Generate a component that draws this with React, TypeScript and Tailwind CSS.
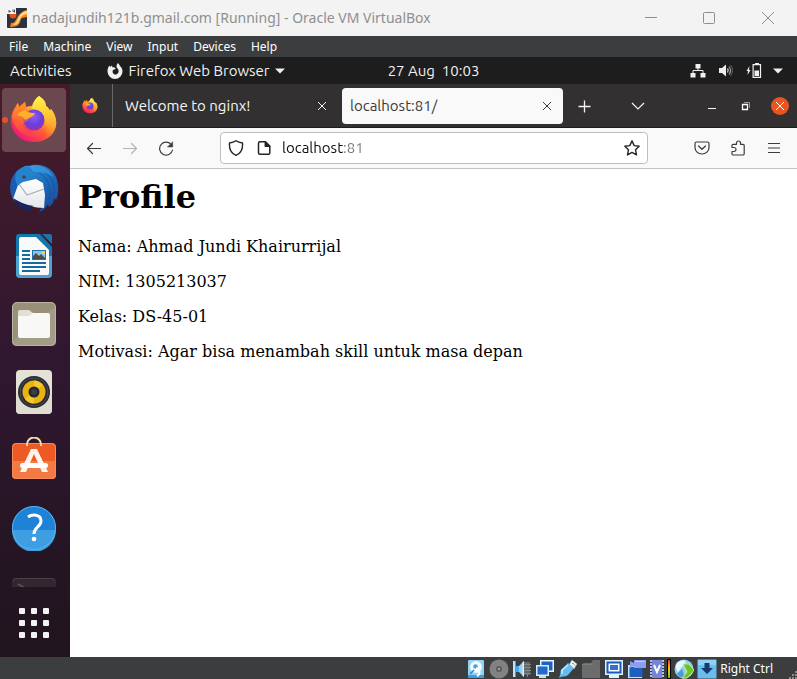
import type { ReactNode } from "react";

const uiFont = "font-['Ubuntu','Noto_Sans',sans-serif]";
const winFont = "font-['Segoe_UI','Noto_Sans',sans-serif]";

/* ---------- Launcher icons ---------- */

function FirefoxLogo({ id, className }: { id: string; className: string }) {
  return (
    <svg viewBox="0 0 48 48" className={className} aria-hidden="true">
      <defs>
        <linearGradient id={`${id}-body`} x1="0.85" y1="0.1" x2="0.2" y2="0.95">
          <stop offset="0" stopColor="#fff04e" />
          <stop offset="0.35" stopColor="#ffb02e" />
          <stop offset="0.6" stopColor="#ff5a36" />
          <stop offset="1" stopColor="#f0147a" />
        </linearGradient>
        <linearGradient id={`${id}-flame`} x1="0.5" y1="0" x2="0.6" y2="1">
          <stop offset="0" stopColor="#fff24a" />
          <stop offset="0.5" stopColor="#ffc233" />
          <stop offset="1" stopColor="#ff7a2e" stopOpacity="0" />
        </linearGradient>
        <radialGradient id={`${id}-globe`} cx="0.5" cy="0.35" r="0.65">
          <stop offset="0" stopColor="#8a5cff" />
          <stop offset="0.6" stopColor="#6a3fd6" />
          <stop offset="1" stopColor="#9a2fc0" />
        </radialGradient>
        <linearGradient id={`${id}-head`} x1="0" y1="0" x2="0.6" y2="1">
          <stop offset="0" stopColor="#ff9a24" />
          <stop offset="1" stopColor="#ff5535" stopOpacity="0.2" />
        </linearGradient>
      </defs>
      <path
        fill={`url(#${id}-body)`}
        d="M29 0c4 3 6 6 7 10 2 1 3 3 4 5l1-2c4 5 6 11 5 17C44 40 35 46 24 46 11 46 1 37 1 24c0-6 2-10 5-14 0-1 1-2 2-3l1 4 6-5 1 5c2-1 4-1 6-1 1-4 4-8 7-10z"
      />
      <path
        fill={`url(#${id}-flame)`}
        d="M29 0c5 3 7 6 7 10 2 1 3 3 4 5l1-2c4 5 6 11 5 17-2 6-6 10-11 12 3-7 2-14-2-20-2-4-7-6-11-10 1-5 3-9 7-12z"
      />
      <circle cx="24" cy="24" r="10.5" fill={`url(#${id}-globe)`} />
      <path
        fill={`url(#${id}-head)`}
        d="M2 19c2-4 3-7 6-12l1 4 6-5 1 6c2 4 4 5 9 5 0 4-5 4-6 6-1 3-4 3-6 4-1 6 5 10 12 9 5-1 8-3 10-6 1 8-8 13-17 10C9 37 3 29 2 19z"
      />
      <path fill="#ffb02a" d="M15 14c3 3 6 3 10 3-1 3-4 4-6 5l-4 2c-1-3-5-5-8-4 1-3 4-5 8-6z" />
    </svg>
  );
}

function ThunderbirdLogo() {
  return (
    <svg viewBox="0 0 50 50" className="size-[50px]" aria-hidden="true">
      <defs>
        <linearGradient id="tb-body" x1="0.2" y1="0" x2="0.8" y2="1">
          <stop offset="0" stopColor="#3096da" />
          <stop offset="0.5" stopColor="#1d68b8" />
          <stop offset="1" stopColor="#194a9c" />
        </linearGradient>
        <linearGradient id="tb-mail" x1="0" y1="0" x2="0" y2="1">
          <stop offset="0" stopColor="#ffffff" />
          <stop offset="1" stopColor="#e4e6ea" />
        </linearGradient>
      </defs>
      <path fill="#1b5bb0" d="M8 8C0 15-1 29 5 38l8 6 5-32z" />
      <path
        fill="url(#tb-body)"
        d="M10 7c3-3 7-5 10-4C32-1 43 5 47 14c3 8 3 16 0 23l-2-2c0 4-2 7-5 9l-1-3c-2 4-5 7-9 8 5-7 6-14 3-22l-8-9-9 2-6 6c-4-8-4-14 0-19z"
      />
      <path fill="none" stroke="#174a94" strokeWidth="1" d="M30 10c9 5 13 14 10 27M35 8c9 7 12 16 9 24" opacity="0.6" />
      <path fill="#3da4e2" d="M20 3c10-2 20 2 24 11-8-6-15-4-21-6-4-1-4-3-3-5z" opacity="0.6" />
      <path fill="url(#tb-mail)" d="M14 19l13-3 7 4 2 12-1 13c-9 0-20-3-31-9l5-14z" />
      <path fill="none" stroke="#a8adb8" strokeWidth="1.2" d="M10 21l8 11 17-6" />
      <path fill="#17265c" d="M4 35c6 4 13 7 21 8-5 1-4 3-1 6C15 48 8 44 4 35z" />
      <path fill="#2583ce" d="M8 8c4-4 9-5 14-3 2 3 2 6 0 9-3 3-8 3-11 6l-2 3c-3-5-4-10-1-15z" />
      <circle cx="15" cy="14" r="1.8" fill="#4a3f45" />
    </svg>
  );
}

function WriterLogo() {
  return (
    <svg viewBox="0 0 38 46" className="h-[46px] w-[38px]" aria-hidden="true">
      <path fill="#1478ae" d="M4 1h21l12 13v27a4 4 0 0 1-4 4H5a4 4 0 0 1-4-4V4a3 3 0 0 1 3-3z" />
      <path fill="#4ba3d0" d="M1 23h36v18a4 4 0 0 1-4 4H5a4 4 0 0 1-4-4z" />
      <path fill="#fafafa" d="M6 4h15l13 13v23a2 2 0 0 1-2 2H6a2 2 0 0 1-2-2V6a2 2 0 0 1 2-2z" />
      <path fill="#1b75aa" d="M27 1h8a2 2 0 0 1 2 2v8z" />
      <g stroke="#146c9e" strokeWidth="2">
        <path d="M7 18h8M7 22h8M7 26h8M7 30h24M7 34h24M7 38h18" />
      </g>
      <path fill="#1b75aa" d="M17 17h14v10H17z" />
      <path fill="#86c6ee" d="M18 18h12v8H18z" />
      <path fill="#4d4d4d" d="M18 26v-3l3-3 3 3 2-2 4 4v1z" />
      <circle cx="28.5" cy="19.5" r="1.5" fill="#ffd23e" />
    </svg>
  );
}

function FilesLogo() {
  return (
    <svg viewBox="0 0 46 46" className="size-[46px]" aria-hidden="true">
      <rect x="1" y="1" width="44" height="44" rx="5" fill="#989079" />
      <path fill="#b0aa98" d="M1 41L45 5v36a4 4 0 0 1-4 4H5a4 4 0 0 1-4-4z" opacity="0.45" />
      <rect x="1.5" y="1.5" width="43" height="43" rx="5" fill="none" stroke="#b9b4a2" />
      <path fill="#e2dfd3" d="M7 11a2 2 0 0 1 2-2h9l4 3h15v8H7z" />
      <path fill="#f8f8f6" d="M7 15h11l4-3h15a2 2 0 0 1 2 2v21a2 2 0 0 1-2 2H9a2 2 0 0 1-2-2z" />
    </svg>
  );
}

function RhythmboxLogo() {
  return (
    <svg viewBox="0 0 38 46" className="h-[46px] w-[38px]" aria-hidden="true">
      <rect x="1" y="1" width="36" height="44" rx="4" fill="#e4e1d7" />
      <path fill="#dcd8cc" d="M1 24h36v17a4 4 0 0 1-4 4H5a4 4 0 0 1-4-4z" opacity="0.6" />
      <circle cx="19" cy="23" r="16" fill="#2a2c36" />
      <circle cx="19" cy="23" r="14" fill="none" stroke="#4a4b52" />
      <circle cx="19" cy="23" r="11.500" fill="#e9b312" />
      <path fill="#f8d336" d="M19 23l-9 7a11.500 11.500 0 0 0 9 4.500zM19 23l9-7a11.500 11.500 0 0 0-9-4.500z" opacity="0.7" />
      <circle cx="19" cy="23" r="5.500" fill="#25262b" />
      <circle cx="19" cy="23" r="3" fill="#3d3e44" />
    </svg>
  );
}

function SoftwareLogo() {
  return (
    <svg viewBox="0 0 46 46" className="size-[46px]" aria-hidden="true">
      <rect x="1" y="6" width="44" height="36" rx="4" fill="#ee5a24" />
      <path fill="#f47a45" d="M1 24h44v14a4 4 0 0 1-4 4H5a4 4 0 0 1-4-4z" />
      <rect x="1.5" y="6.500" width="43" height="35" rx="4" fill="none" stroke="#f68b5b" />
      <path fill="none" stroke="#f3dba9" strokeWidth="2" d="M16 9V7.500a7 7 0 0 1 14 0V9" />
      <path fill="#fff" fillRule="evenodd" d="M20 12h6l11 23h-6l-8-18-8 18H9z" opacity="0.92" />
      <rect x="9" y="26" width="28" height="5" rx="2.500" fill="#fff" />
    </svg>
  );
}

function HelpLogo() {
  return (
    <svg viewBox="0 0 46 46" className="size-[46px]" aria-hidden="true">
      <circle cx="23" cy="23" r="22" fill="#1e82d6" />
      <path fill="#3d9fe2" d="M1 25h44a22 22 0 0 1-44 0z" />
      <circle cx="23" cy="23" r="21.500" fill="none" stroke="#5db2ea" />
      <path
        fill="none"
        stroke="#fff"
        strokeWidth="3"
        d="M17 12c4-3 13-3 13 4 0 6-7 6-7 13"
      />
      <circle cx="23" cy="34" r="2.300" fill="#fff" />
    </svg>
  );
}

function TerminalLogo() {
  return (
    <svg viewBox="0 0 46 46" className="size-[46px]" aria-hidden="true">
      <rect x="1" y="2" width="44" height="44" rx="4" fill="#33262f" />
      <path fill="none" stroke="#4d3f48" d="M2 5.500a3 3 0 0 1 3-3h36a3 3 0 0 1 3 3" />
      <path fill="none" stroke="#62535c" strokeWidth="1.500" d="M7 8l7 4-7 4" />
    </svg>
  );
}

function DockItem({ label, active, children }: { label: string; active?: boolean; children: ReactNode }) {
  return (
    <button
      aria-label={label}
      className={`relative flex size-16 shrink-0 items-center justify-center rounded-[4px] ${active ? "bg-[#6b4850]" : ""}`}
    >
      {active && <span className="absolute left-0 top-[29px] size-[6px] rounded-full bg-[#e95420]" />}
      {children}
    </button>
  );
}

function Dock() {
  return (
    <nav
      aria-label="Dock"
      className="flex w-[70px] shrink-0 flex-col bg-linear-to-b from-[#471a29] via-[#2f1730] to-[#20141d] pl-[2px] pt-1"
    >
      <div className="flex h-[499px] flex-col gap-1 overflow-hidden">
        <DockItem label="Firefox Web Browser" active>
          <FirefoxLogo id="dock-ff" className="size-12" />
        </DockItem>
        <DockItem label="Thunderbird Mail"><ThunderbirdLogo /></DockItem>
        <DockItem label="LibreOffice Writer"><WriterLogo /></DockItem>
        <DockItem label="Files"><FilesLogo /></DockItem>
        <DockItem label="Rhythmbox"><RhythmboxLogo /></DockItem>
        <DockItem label="Ubuntu Software"><SoftwareLogo /></DockItem>
        <DockItem label="Help"><HelpLogo /></DockItem>
        <div className="flex w-16 justify-center pt-3"><TerminalLogo /></div>
      </div>
      <button aria-label="Show Applications" className="mt-1 flex size-16 items-center justify-center">
        <span className="grid grid-cols-3 gap-[6px]">
          {Array.from({ length: 9 }, (_, i) => (
            <span key={i} className="size-[6px] rounded-[1px] bg-[#f2f2f2]" />
          ))}
        </span>
      </button>
    </nav>
  );
}

/* ---------- Host window ---------- */

function VirtualBoxIcon() {
  return (
    <svg viewBox="0 0 20 20" className="size-5" aria-hidden="true">
      <rect width="20" height="20" rx="1" fill="#2c3040" />
      <path fill="#f08a1d" d="M20 2v7l-5 1c-2 1-1 4-3 6-1 2-4 3-9 3l1-4c4 0 4-2 6-5 2-4 5-7 10-8z" />
      <path fill="#ffd98a" d="M20 3v3c-6 1-6 4-8 7-1 3-3 4-6 4 5-3 4-6 7-10 2-2 4-4 7-4z" />
      <circle cx="6" cy="7" r="3.500" fill="#e2541b" />
      <rect width="9" height="6" fill="#f4f4f4" />
      <path stroke="#555" d="M2 2v2.500M2 3.500h2M6 1.500v2h2M7.500 1.500v3" fill="none" />
    </svg>
  );
}

function TitleBar() {
  return (
    <header className={`flex h-9 items-center bg-[#f3f3f3] pl-[7px] text-[#8f8f8f] ${winFont}`}>
      <VirtualBoxIcon />
      <h1 className="ml-[5px] flex-1 whitespace-nowrap text-[14px] leading-5">
        nadajundih121b.gmail.com [Running] - Oracle VM VirtualBox
      </h1>
      <button aria-label="Minimize" className="flex h-8 w-[58px] items-center justify-center">
        <svg viewBox="0 0 14 14" className="size-[14px]" fill="none" stroke="currentColor"><path d="M0 6.500h12" /></svg>
      </button>
      <button aria-label="Maximize" className="flex h-8 w-[58px] items-center justify-center">
        <svg viewBox="0 0 14 14" className="size-[14px]" fill="none" stroke="currentColor"><rect x="0.500" y="1.500" width="11" height="11" rx="1" /></svg>
      </button>
      <button aria-label="Close" className="flex h-8 w-[58px] items-center justify-center">
        <svg viewBox="0 0 14 14" className="size-[14px]" fill="none" stroke="currentColor"><path d="M1 1l12 12M13 1L1 13" /></svg>
      </button>
    </header>
  );
}

function MenuBar() {
  return (
    <nav aria-label="Machine menu" className={`flex h-[21px] items-center gap-[15px] bg-[#3c3d3e] pl-[9px] text-[12px] leading-4 text-white ${winFont}`}>
      {["File", "Machine", "View", "Input", "Devices", "Help"].map((m) => (
        <button key={m}>{m}</button>
      ))}
    </nav>
  );
}

/* ---------- Guest top bar ---------- */

function TopBar() {
  return (
    <div className={`grid h-[27px] grid-cols-[1fr_auto_1fr] items-center bg-[#1d1d1d] px-[10px] text-[15px] leading-5 text-[#f0f0f0] ${uiFont}`}>
      <div className="flex items-center gap-[35px]">
        <button>Activities</button>
        <button className="flex items-center whitespace-nowrap">
          <svg viewBox="0 0 16 16" className="mr-[6px] size-4" aria-hidden="true">
            <path
              fill="#f0f0f0"
              fillRule="evenodd"
              d="M11 0c1 1 1.500 2 2 3 1.500 1 2.500 3 2.500 5.500A7.500 7.500 0 0 1 .5 8.500C.5 6 1 4 2.500 2.500L3 4l2-1.500.5 2c2-.5 3 .5 3 1.500L6 7c-1 2 0 4.500 2.500 4.500S12 9 11.500 7c-.5-1.500-2-2-2-3.500S10 1 11 0z"
            />
          </svg>
          Firefox Web Browser
          <svg viewBox="0 0 10 6" className="ml-[5px] h-[6px] w-[10px]" aria-hidden="true"><path fill="#f0f0f0" d="M0 0.500h10L5 5.500z" /></svg>
        </button>
      </div>
      <button className="whitespace-pre pl-[70px]">27 Aug  10:03</button>
      <button aria-label="System menu" className="flex items-center justify-end gap-3 pr-1">
        <svg viewBox="0 0 16 14" className="h-[14px] w-4" aria-hidden="true">
          <path fill="#f0f0f0" d="M5.500 0h5v4.500h-5zM0.500 9h5v4.500h-5zM10.500 9h5v4.500h-5z" />
          <path fill="none" stroke="#f0f0f0" d="M8 4v3M3 10V6.500h10V10" />
        </svg>
        <svg viewBox="0 0 16 14" className="h-[14px] w-4" aria-hidden="true">
          <path fill="#f0f0f0" d="M1 4h3L8 0.500v12L4 9H1z" />
          <path fill="none" stroke="#d0d0d0" d="M9.500 4.500q1.500 2 0 4" strokeWidth="1.300" />
          <path fill="none" stroke="#a0a0a0" d="M11 2.500q3 4 0 8" strokeWidth="1.200" />
          <path fill="none" stroke="#666" d="M12.500 1q4 5.500 0 11" />
        </svg>
        <svg viewBox="0 0 16 16" className="size-4" aria-hidden="true">
          <path fill="#f0f0f0" d="M3.500 3L.5 8H2l-.5 4 3-5H3z" />
          <path fill="none" stroke="#f0f0f0" strokeWidth="1.200" d="M7.100 1.600h7.400v12.800H7.100z" />
          <path fill="#f0f0f0" d="M9 0h4v1.500H9zM8.500 7.500h4.500V13H8.500z" />
        </svg>
        <svg viewBox="0 0 10 6" className="-ml-px h-[6px] w-[10px]" aria-hidden="true"><path fill="#f0f0f0" d="M0 0.500h10L5 5.500z" /></svg>
      </button>
    </div>
  );
}

/* ---------- Browser ---------- */

function Cross() {
  return (
    <svg viewBox="0 0 16 16" className="size-4" fill="none" stroke="currentColor" aria-hidden="true">
      <path d="M4 4l8 8M12 4l-8 8" />
    </svg>
  );
}

function TabBar() {
  return (
    <div className="flex h-11 items-center border-b border-[#1f1a1e] bg-[#323031] text-[15px] leading-5 text-[#f5f5f5]">
      <button aria-label="Firefox View" className="flex h-full w-[43px] shrink-0 items-center justify-center border-r border-[#6b696b] pr-[2px]">
        <FirefoxLogo id="tab-ff" className="size-4" />
      </button>
      <div role="tablist" className="flex min-w-0">
        <div className="flex h-9 w-[229px] items-center pl-3 pr-3">
          <button role="tab" aria-selected="false" className="flex-1 text-left">Welcome to nginx!</button>
          <button aria-label="Close Welcome to nginx!"><Cross /></button>
        </div>
        <div className="flex h-9 w-[221px] items-center rounded-[4px] bg-[#f9f9fa] px-2 text-[#3a393c]">
          <button role="tab" aria-selected="true" className="flex-1 text-left">localhost:81/</button>
          <button aria-label="Close localhost:81/"><Cross /></button>
        </div>
      </div>
      <button aria-label="New tab" className="ml-1 flex size-9 shrink-0 items-center justify-center">
        <svg viewBox="0 0 16 16" className="size-4" fill="none" stroke="currentColor" strokeWidth="1.300"><path d="M7.500 2.500v12M1.500 8.500h12" /></svg>
      </button>
      <button aria-label="List all tabs" className="ml-[17px] flex size-9 shrink-0 items-center justify-center">
        <svg viewBox="0 0 16 16" className="size-4" fill="none" stroke="currentColor" strokeWidth="1.200"><path d="M2 5l6 6 6-6" /></svg>
      </button>
      <div className="ml-auto flex">
        <button aria-label="Minimize browser" className="flex h-9 w-[34px] items-center justify-center">
          <svg viewBox="0 0 16 16" className="size-4" fill="none" stroke="currentColor"><path d="M4 10.500h8" /></svg>
        </button>
        <button aria-label="Restore browser" className="flex h-9 w-[34px] items-center justify-center">
          <svg viewBox="0 0 16 16" className="size-4" fill="none"><path stroke="#999" d="M6 4.500h5.500V10" /><path stroke="#fff" strokeWidth="1.300" d="M4.500 6.500h5v5h-5z" /></svg>
        </button>
        <button aria-label="Close browser" className="flex h-9 w-[34px] items-center justify-center">
          <span className="flex size-[18px] items-center justify-center rounded-full bg-[#e95420] text-white"><Cross /></span>
        </button>
      </div>
    </div>
  );
}

function ToolButton({ label, dim, children }: { label: string; dim?: boolean; children: ReactNode }) {
  return (
    <button aria-label={label} className={`flex h-8 w-9 shrink-0 items-center justify-center ${dim ? "text-[#b3b3b3]" : "text-[#3b3b3f]"}`}>
      <svg viewBox="0 0 16 16" className="size-4" fill="none" stroke="currentColor" strokeWidth="1.200" strokeLinecap="round" strokeLinejoin="round">
        {children}
      </svg>
    </button>
  );
}

function Toolbar() {
  return (
    <div className="flex h-[41px] items-center border-b border-[#c4c4c4] bg-[#f9f9fa] pl-[6px] pr-[5px]">
      <ToolButton label="Back"><path d="M14.500 8.500H1.500M6.500 3.500l-5 5 5 5" /></ToolButton>
      <ToolButton label="Forward" dim><path d="M1.500 8.500h13M9.500 3.500l5 5-5 5" /></ToolButton>
      <ToolButton label="Reload">
        <path d="M13.500 5A6.500 6.500 0 1 0 14.500 10" />
        <path fill="currentColor" strokeWidth="0.500" d="M14.700 2v5h-5z" />
      </ToolButton>
      <div className="mx-9 flex h-8 min-w-0 flex-1 items-center rounded-[4px] border border-[#bdbdbd] bg-white px-[7px] text-[#26262a]">
        <svg viewBox="0 0 16 16" className="size-4 shrink-0" fill="none" stroke="currentColor" strokeWidth="1.400" strokeLinejoin="round" aria-hidden="true">
          <path d="M8 .8c2 1.500 4.500 2 6.500 2.200C15 9 12.500 13.500 8 15.300 3.500 13.500 1 9 1.500 3 3.500 2.800 6 2.300 8 .8z" />
        </svg>
        <svg viewBox="0 0 16 16" className="ml-3 size-4 shrink-0" fill="none" stroke="currentColor" strokeWidth="1.500" strokeLinejoin="round" aria-hidden="true">
          <path d="M3.500 1.700h5.800l4.500 4.500v6.600a1.500 1.500 0 0 1-1.500 1.500H4A1.500 1.500 0 0 1 2.500 12.800V3.200a1.500 1.500 0 0 1 1.500-1.500z" />
          <path fill="currentColor" d="M9.300 1.700v4.500h4.500z" />
        </svg>
        <input
          type="text"
          aria-label="Address"
          defaultValue="localhost:81"
          className="ml-[10px] min-w-0 flex-1 bg-linear-to-r from-[#0c0c0d] from-[62px] to-[#77777b] to-[62px] bg-clip-text text-[15px] leading-6 text-transparent caret-black outline-none"
        />
        <svg viewBox="0 0 16 16" className="size-4 shrink-0" fill="none" stroke="currentColor" strokeWidth="1.400" strokeLinejoin="round" aria-hidden="true">
          <path d="M8 .9l2.200 4.700 5 .6-3.700 3.500 1 5.200L8 12.400l-4.500 2.500 1-5.200L.8 6.200l5-.6z" />
        </svg>
      </div>
      <ToolButton label="Save to Pocket">
        <path d="M2.500 2h11A1.500 1.500 0 0 1 15 3.500V7.500a7 6.500 0 0 1-14 0v-4A1.500 1.500 0 0 1 2.500 2z" />
        <path d="M4.500 6L8 9.300 11.500 6" />
      </ToolButton>
      <ToolButton label="Extensions">
        <path d="M2 7.500V5.500A1.200 1.200 0 0 1 3.200 4.300H6.500V3a2 2 0 0 1 4 0v1.300h2.500A1.200 1.200 0 0 1 14.200 5.500v8.300A1.200 1.200 0 0 1 13 15H3.200A1.200 1.200 0 0 1 2 13.800V11.500h2a2 2 0 0 0 0-4z" />
      </ToolButton>
      <ToolButton label="Application menu"><path d="M2.500 3.500h11M2.500 8h11M2.500 12.500h11" /></ToolButton>
    </div>
  );
}

function ProfilePage() {
  return (
    <article className="flex-1 bg-white px-2 pt-[10px] font-['DejaVu_Serif',serif] text-[16px] leading-[19px] text-black">
      <h2 className="mb-[21px] text-[32px] font-bold leading-[37px]">Profile</h2>
      <div className="flex flex-col gap-4">
        <p>Nama: Ahmad Jundi Khairurrijal</p>
        <p>NIM: 1305213037</p>
        <p>Kelas: DS-45-01</p>
        <p>Motivasi: Agar bisa menambah skill untuk masa depan</p>
      </div>
    </article>
  );
}

/* ---------- Host status bar ---------- */

function StatusIcon({ children }: { children: ReactNode }) {
  return <svg viewBox="0 0 20 20" className="size-5 shrink-0" aria-hidden="true">{children}</svg>;
}

function StatusBar() {
  return (
    <footer className={`flex h-[22px] items-center justify-end gap-[3px] bg-[#3c3d3e] pt-[2px] text-[12px] leading-4 text-white ${winFont}`}>
      <StatusIcon>
        <rect x="2" y="1" width="16" height="18" rx="1" fill="#8fd3f8" />
        <path fill="#3f9be0" d="M2 16h16v3H2z" />
        <circle cx="10" cy="8" r="6" fill="#f4fbff" />
        <circle cx="9.500" cy="7.500" r="2.300" fill="#4b9ddb" />
        <path stroke="#2b7cc8" strokeWidth="1.500" d="M4 15l4-4" />
        <path stroke="#fff" strokeWidth="2" d="M10 9c4 2 5 6 1 8" fill="none" />
      </StatusIcon>
      <StatusIcon>
        <circle cx="10" cy="10" r="9.500" fill="#828282" />
        <circle cx="10" cy="10" r="3" fill="#5a5a5a" />
        <circle cx="10" cy="10" r="1.300" fill="#9a9a9a" />
      </StatusIcon>
      <StatusIcon>
        <path fill="#686868" d="M12 3h6v13h-6z" />
        <path stroke="#858585" d="M11 5.500h8M11 8.500h8M11 11.500h8M11 14.500h8M15.500 15v3" />
        <path fill="#b9e5fb" d="M1 2h2.500v16H1z" />
        <path fill="#49a9e8" d="M3.500 7H8v6H3.500z" />
        <path fill="#8ed2f8" d="M7 7l5-5v16l-5-5z" />
        <path fill="#d5f0ff" d="M10.500 3.500L12 2v16l-1.500-1.500z" />
      </StatusIcon>
      <StatusIcon>
        <path fill="#e9f6ff" d="M5 1h14v12H5z" />
        <path fill="#1e62c0" d="M6.500 2.500h11v9h-11z" />
        <path fill="#d2edfc" d="M1 6h13v11H1z" />
        <path fill="#2469c9" d="M2.500 7.500h10v8h-10z" />
        <path fill="#d9d9d9" d="M4 17h7v2H4z" />
      </StatusIcon>
      <StatusIcon>
        <path fill="#f2f2f2" stroke="#9bb" strokeWidth="0.500" d="M14 1l5 4-3 5-5-4z" />
        <path stroke="#456" d="M14.500 4l1 1M16 5.500l1 1" />
        <path fill="#63bdf2" d="M10 4l6 5-6 7c-2 2-5 1-7 2l-2 1 1-3c1-2 0-4 1-5z" />
        <path fill="none" stroke="#c9ebff" strokeWidth="1.500" d="M10 6l-6 5v4" />
      </StatusIcon>
      <StatusIcon>
        <path fill="#6c6c6c" d="M1 5l2-1h7l2-3h7v18H1z" />
        <path stroke="#7c7c7c" d="M1 5.500h11" />
      </StatusIcon>
      <StatusIcon>
        <path fill="#dff1fc" d="M1 1h18v15H1zM5 16h10v3H5z" />
        <path fill="#1b5ab8" d="M2.500 2.500h15v12h-15z" />
        <path fill="#fff" d="M4.500 4.500h11v8h-11z" />
        <path fill="#2f73cc" d="M6 6h8v5H6z" />
      </StatusIcon>
      <StatusIcon>
        <path fill="#bfe4fa" d="M1 6h14v13H1z" />
        <path fill="#1d5fbd" d="M2.500 8h13v10h-13z" />
        <path fill="#8e9cf0" d="M7 1h12v8H7zM3 2l4 2v3l-4 2z" />
        <path stroke="#c4cbff" d="M8 2.500h10" />
      </StatusIcon>
      <svg viewBox="0 0 14 20" className="h-5 w-[14px] shrink-0" aria-hidden="true">
        <path fill="#7685d8" d="M2 1h10v18H2z" />
        <path stroke="#b4bdf2" strokeDasharray="2 1" strokeWidth="2" d="M1 1v18M13 1v18" />
        <path stroke="#fff" strokeWidth="2" fill="none" d="M4 6l3 7 3-7" />
      </svg>
      <span className="h-5 w-1 border border-black bg-linear-to-t from-[#24d61c] via-[#f5c518] to-[#ef2b1a]" />
      <StatusIcon>
        <circle cx="10" cy="10" r="9.500" fill="#8fd0f2" />
        <path fill="#e6f7ff" d="M3 4c4-4 8-3 9-1L4 13c-2-2-3-6-1-9z" />
        <path fill="#4c9ad0" d="M3 15l5-5 3 9c-3 0-6-1-8-4z" />
        <path fill="#6ec520" stroke="#d5f5b5" strokeWidth="0.800" d="M9 5h6l5 6-2 3-5 5H8l5-6z" />
      </StatusIcon>
      <StatusIcon>
        <rect x="0.500" y="0.500" width="19" height="19" fill="#69bdf0" />
        <path fill="#b9e5fc" d="M1 1h18v5H1z" opacity="0.500" />
        <path fill="#153a6b" d="M7.500 4h5v5H16l-6 6-6-6h3.500z" />
      </StatusIcon>
      <span>Right Ctrl</span>
      <svg viewBox="0 0 8 8" className="ml-[13px] size-2 self-end" aria-hidden="true">
        <path stroke="#8e8e8e" strokeDasharray="2 1" strokeWidth="2" d="M6 1h2M3 4h5M0 7h8" />
      </svg>
    </footer>
  );
}

export default function App() {
  return (
    <div className="flex min-h-screen flex-col bg-[#3c3d3e]">
      <TitleBar />
      <MenuBar />
      <TopBar />
      <main className="flex flex-1">
        <Dock />
        <section aria-label="Browser" className={`flex min-w-0 flex-1 flex-col ${uiFont}`}>
          <TabBar />
          <Toolbar />
          <ProfilePage />
        </section>
      </main>
      <StatusBar />
    </div>
  );
}
